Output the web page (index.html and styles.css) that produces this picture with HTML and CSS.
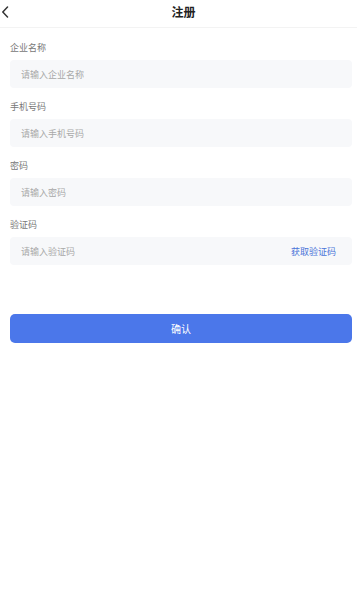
FILE: index.html
```html
<!DOCTYPE html>
<html lang="zh-CN">
<head>
<meta charset="utf-8">
<title>注册</title>
<link rel="stylesheet" href="styles.css">
</head>
<body>
<header class="nav">
  <span class="back" aria-label="返回">
    <svg width="8" height="12" viewBox="0 0 8 12"><path d="M6.5 1 L1.8 6 L6.5 11" fill="none" stroke="#333" stroke-width="1.5" stroke-linecap="round" stroke-linejoin="round"/></svg>
  </span>
  <h1 class="title">注册</h1>
</header>
<main class="form">
  <div class="field">
    <div class="label">企业名称</div>
    <div class="input"><span class="ph">请输入企业名称</span></div>
  </div>
  <div class="field">
    <div class="label">手机号码</div>
    <div class="input"><span class="ph">请输入手机号码</span></div>
  </div>
  <div class="field">
    <div class="label">密码</div>
    <div class="input"><span class="ph">请输入密码</span></div>
  </div>
  <div class="field">
    <div class="label">验证码</div>
    <div class="input"><span class="ph">请输入验证码</span><span class="code">获取验证码</span></div>
  </div>
  <button class="submit">确认</button>
</main>
</body>
</html>
```
FILE: styles.css
```css
* { box-sizing: border-box; }
html, body { margin: 0; padding: 0; background: #fff; }
body {
  font-family: "Noto Sans CJK SC", "Noto Sans", sans-serif;
  color: #333;
  width: 357px;
}
.nav {
  position: relative;
  height: 28px;
  border-bottom: 1px solid #f3f3f3;
  display: flex;
  align-items: center;
  justify-content: center;
  padding-left: 10px;
}
.back {
  position: absolute;
  left: 1px;
  top: 6px;
  width: 8px;
  height: 12px;
  display: block;
}
.back svg { display: block; }
.title {
  margin: 0;
  font-size: 12px;
  font-weight: 700;
  color: #222;
  line-height: 16px;
  margin-top: -4px;
}
.form {
  padding: 13px 5px 0 10px;
}
.field { margin-bottom: 12px; }
.label {
  font-size: 9px;
  line-height: 14px;
  color: #777;
  margin-bottom: 5px;
}
.input {
  height: 28px;
  background: #f7f8fa;
  border-radius: 4px;
  display: flex;
  align-items: center;
  justify-content: space-between;
  padding: 0 16px 0 11px;
}
.ph { font-size: 9px; color: #a8a8a8; }
.code { font-size: 9px; color: #4a74d9; }
.submit {
  display: block;
  width: 100%;
  height: 29px;
  margin-top: 49px;
  border: 0;
  border-radius: 5px;
  background: #4b77ea;
  color: #fff;
  font-family: inherit;
  font-size: 10px;
  padding: 0;
}
```
